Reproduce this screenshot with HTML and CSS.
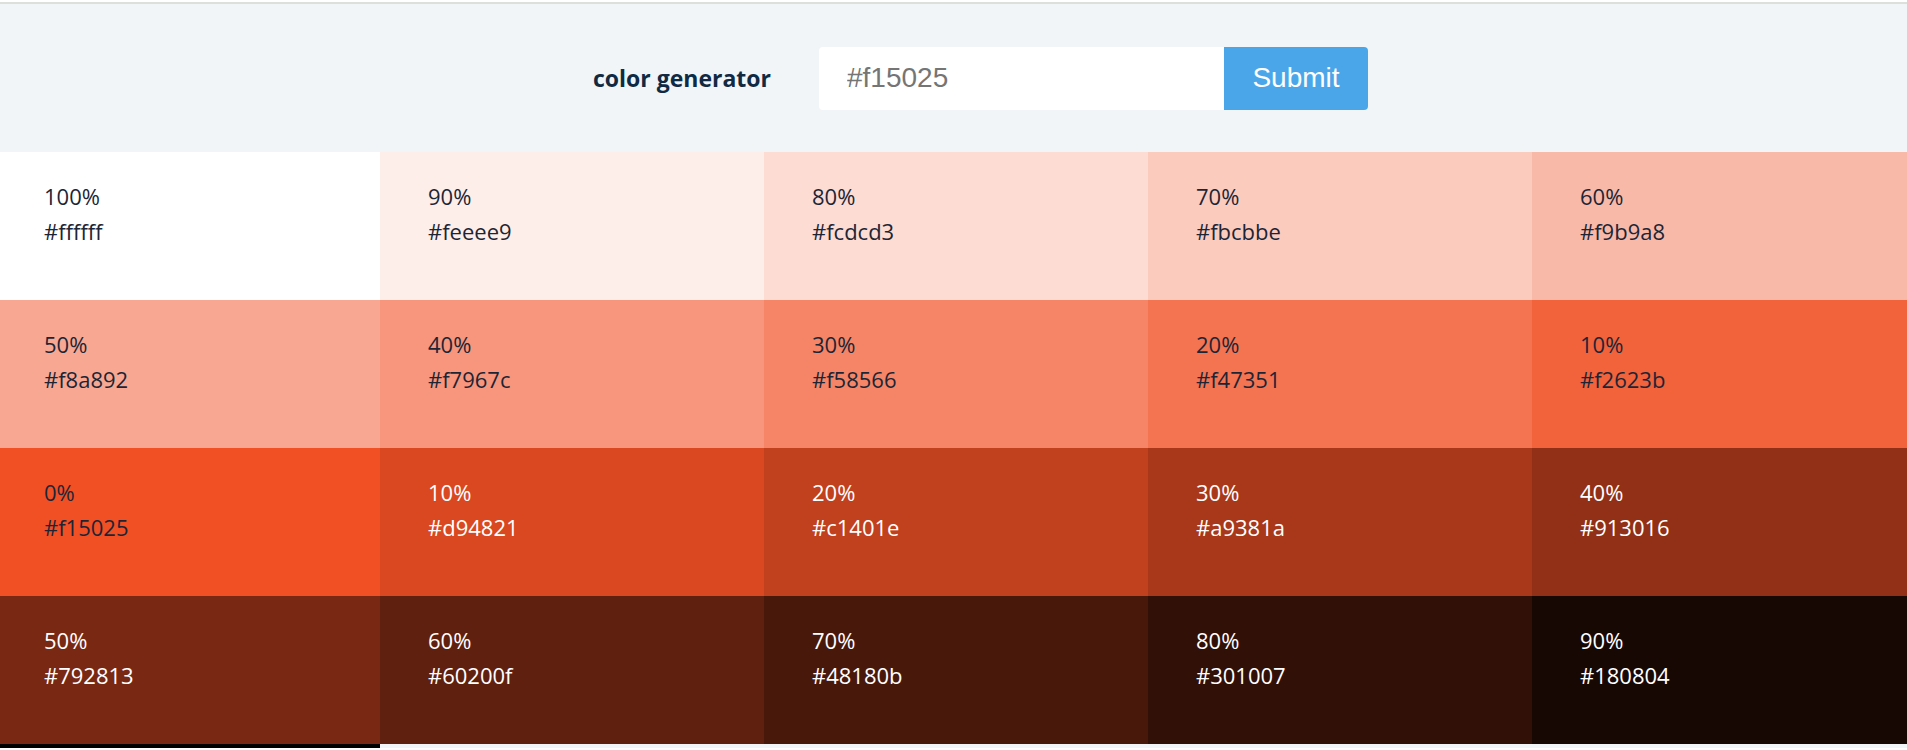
FILE: index.html
```html
<!DOCTYPE html>
<html lang="en">
<head>
<meta charset="utf-8">
<title>Color Generator</title>
<link rel="stylesheet" href="styles.css">
</head>
<body>
<header class="top">
  <h3 class="title">color generator</h3>
  <form class="form">
    <input class="color-input" type="text" value="#f15025">
    <button class="btn" type="button">Submit</button>
  </form>
</header>
<section class="colors">
  <article class="color" style="background:#ffffff"><p class="pct">100%</p><p class="hex">#ffffff</p></article>
  <article class="color" style="background:#feeee9"><p class="pct">90%</p><p class="hex">#feeee9</p></article>
  <article class="color" style="background:#fcdcd3"><p class="pct">80%</p><p class="hex">#fcdcd3</p></article>
  <article class="color" style="background:#fbcbbe"><p class="pct">70%</p><p class="hex">#fbcbbe</p></article>
  <article class="color" style="background:#f9b9a8"><p class="pct">60%</p><p class="hex">#f9b9a8</p></article>
  <article class="color" style="background:#f8a892"><p class="pct">50%</p><p class="hex">#f8a892</p></article>
  <article class="color" style="background:#f7967c"><p class="pct">40%</p><p class="hex">#f7967c</p></article>
  <article class="color" style="background:#f58566"><p class="pct">30%</p><p class="hex">#f58566</p></article>
  <article class="color" style="background:#f47351"><p class="pct">20%</p><p class="hex">#f47351</p></article>
  <article class="color" style="background:#f2623b"><p class="pct">10%</p><p class="hex">#f2623b</p></article>
  <article class="color" style="background:#f15025"><p class="pct">0%</p><p class="hex">#f15025</p></article>
  <article class="color light" style="background:#d94821"><p class="pct">10%</p><p class="hex">#d94821</p></article>
  <article class="color light" style="background:#c1401e"><p class="pct">20%</p><p class="hex">#c1401e</p></article>
  <article class="color light" style="background:#a9381a"><p class="pct">30%</p><p class="hex">#a9381a</p></article>
  <article class="color light" style="background:#913016"><p class="pct">40%</p><p class="hex">#913016</p></article>
  <article class="color light" style="background:#792813"><p class="pct">50%</p><p class="hex">#792813</p></article>
  <article class="color light" style="background:#60200f"><p class="pct">60%</p><p class="hex">#60200f</p></article>
  <article class="color light" style="background:#48180b"><p class="pct">70%</p><p class="hex">#48180b</p></article>
  <article class="color light" style="background:#301007"><p class="pct">80%</p><p class="hex">#301007</p></article>
  <article class="color light" style="background:#180804"><p class="pct">90%</p><p class="hex">#180804</p></article>
</section>
<div class="bottom"><div class="bottom-dark"></div></div>
</body>
</html>
```

FILE: styles.css
```css
html, body {
  margin: 0;
  padding: 0;
}
body {
  overflow: hidden;
  padding-top: 2px;
  background-color: #ffffff;
  font-family: "Open Sans", "Noto Sans", sans-serif;
}
.top {
  border-top: 2px solid #dcdfda;
  background: #f1f5f8;
  height: 150px;
  display: flex;
  align-items: center;
  justify-content: center;
  padding-left: 54px;
  box-sizing: border-box;
}
.title {
  margin: 0 48px 0 0;
  font-size: 23px;
  font-weight: 700;
  color: #102a43;
}
.form {
  display: flex;
  margin: 0;
}
.color-input {
  width: 405px;
  height: 63px;
  box-sizing: border-box;
  border: none;
  border-radius: 4px 0 0 4px;
  padding: 0 0 0 28px;
  font-family: "Liberation Sans", Arial, sans-serif;
  font-size: 28px;
  color: #757575;
  background: #ffffff;
  outline: none;
}
.btn {
  width: 144px;
  height: 63px;
  border: none;
  border-radius: 0 4px 4px 0;
  background: #4ba6e9;
  color: #ffffff;
  font-family: "Liberation Sans", Arial, sans-serif;
  font-size: 28px;
  padding: 0;
  cursor: pointer;
}
.colors {
  display: grid;
  grid-template-columns: repeat(5, 384px);
  grid-auto-rows: 148px;
  width: 1920px;
  margin-left: -4px;
}
.color {
  padding: 27px 0 0 48px;
  box-sizing: border-box;
  color: #1c2536;
}
.color.light {
  color: #ffffff;
}
.pct, .hex {
  margin: 0;
  font-size: 22px;
  line-height: 35px;
}
.bottom {
  height: 4px;
  background: #f1f5f8;
  display: flex;
}
.bottom-dark {
  width: 380px;
  background: #000000;
}
```
